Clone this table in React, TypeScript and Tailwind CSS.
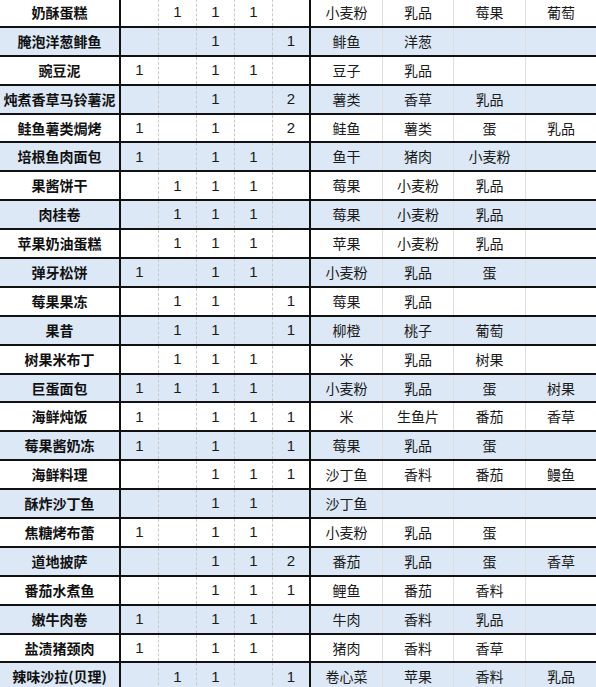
import React from 'react';

type Row = {
  name: string;
  counts: (number | null)[];
  items: string[];
};

const rows: Row[] = [
  { name: '奶酥蛋糕', counts: [null, 1, 1, 1, null], items: ['小麦粉', '乳品', '莓果', '葡萄'] },
  { name: '腌泡洋葱鲱鱼', counts: [null, null, 1, null, 1], items: ['鲱鱼', '洋葱'] },
  { name: '豌豆泥', counts: [1, null, 1, 1, null], items: ['豆子', '乳品'] },
  { name: '炖煮香草马铃薯泥', counts: [null, null, 1, null, 2], items: ['薯类', '香草', '乳品'] },
  { name: '鲑鱼薯类焗烤', counts: [1, null, 1, null, 2], items: ['鲑鱼', '薯类', '蛋', '乳品'] },
  { name: '培根鱼肉面包', counts: [1, null, 1, 1, null], items: ['鱼干', '猪肉', '小麦粉'] },
  { name: '果酱饼干', counts: [null, 1, 1, 1, null], items: ['莓果', '小麦粉', '乳品'] },
  { name: '肉桂卷', counts: [null, 1, 1, 1, null], items: ['莓果', '小麦粉', '乳品'] },
  { name: '苹果奶油蛋糕', counts: [null, 1, 1, 1, null], items: ['苹果', '小麦粉', '乳品'] },
  { name: '弹牙松饼', counts: [1, null, 1, 1, null], items: ['小麦粉', '乳品', '蛋'] },
  { name: '莓果果冻', counts: [null, 1, 1, null, 1], items: ['莓果', '乳品'] },
  { name: '果昔', counts: [null, 1, 1, null, 1], items: ['柳橙', '桃子', '葡萄'] },
  { name: '树果米布丁', counts: [null, 1, 1, 1, null], items: ['米', '乳品', '树果'] },
  { name: '巨蛋面包', counts: [1, 1, 1, 1, null], items: ['小麦粉', '乳品', '蛋', '树果'] },
  { name: '海鲜炖饭', counts: [1, null, 1, 1, 1], items: ['米', '生鱼片', '番茄', '香草'] },
  { name: '莓果酱奶冻', counts: [1, null, 1, null, 1], items: ['莓果', '乳品', '蛋'] },
  { name: '海鲜料理', counts: [null, null, 1, 1, 1], items: ['沙丁鱼', '香料', '番茄', '鳗鱼'] },
  { name: '酥炸沙丁鱼', counts: [null, null, 1, 1, null], items: ['沙丁鱼'] },
  { name: '焦糖烤布蕾', counts: [1, null, 1, 1, null], items: ['小麦粉', '乳品', '蛋'] },
  { name: '道地披萨', counts: [null, null, 1, 1, 2], items: ['番茄', '乳品', '蛋', '香草'] },
  { name: '番茄水煮鱼', counts: [null, null, 1, 1, 1], items: ['鲤鱼', '番茄', '香料'] },
  { name: '嫩牛肉卷', counts: [1, null, 1, 1, null], items: ['牛肉', '香料', '乳品'] },
  { name: '盐渍猪颈肉', counts: [1, null, 1, 1, null], items: ['猪肉', '香料', '香草'] },
  { name: '辣味沙拉(贝理)', counts: [null, 1, 1, null, 1], items: ['卷心菜', '苹果', '香料', '乳品'] },
];

const cjk = "font-['Noto_Sans_CJK_SC','Noto_Sans',sans-serif]";

const RecipeRow: React.FC<{ row: Row; shaded: boolean }> = ({ row, shaded }) => {
  const items = [0, 1, 2, 3].map((i) => row.items[i] ?? '');
  return (
    <div
      className={`grid grid-cols-[121px_38px_38px_38px_38px_38px_72px_71px_72px_70px] h-[28.9px] border-b-2 border-[#111] ${
        shaded ? 'bg-[#dce8f5]' : 'bg-white'
      }`}
    >
      <div
        className={`flex items-center justify-center border-r-2 border-[#111] text-[14px] font-bold text-[#111] whitespace-nowrap ${cjk}`}
      >
        {row.name}
      </div>
      {row.counts.map((c, i) => (
        <div
          key={i}
          className={`flex items-center justify-center text-[15px] text-[#1a1a1a] font-['Liberation_Sans',Arial,sans-serif] ${
            i === 4 ? 'border-r-2 border-[#111]' : 'border-r border-dashed border-[#c9c9c9]'
          }`}
        >
          {c ?? ''}
        </div>
      ))}
      {items.map((t, i) => (
        <div
          key={i}
          className={`flex items-center justify-center text-[14px] text-[#1a1a1a] whitespace-nowrap ${cjk} ${
            i < 3 ? 'border-r border-[#dedede]' : ''
          }`}
        >
          {t}
        </div>
      ))}
    </div>
  );
};

export default function App() {
  return (
    <div className="w-[596px] h-[687px] overflow-hidden bg-white">
      <div className="-mt-[1px]">
        {rows.map((r, i) => (
          <RecipeRow key={r.name} row={r} shaded={i % 2 === 1} />
        ))}
      </div>
    </div>
  );
}
